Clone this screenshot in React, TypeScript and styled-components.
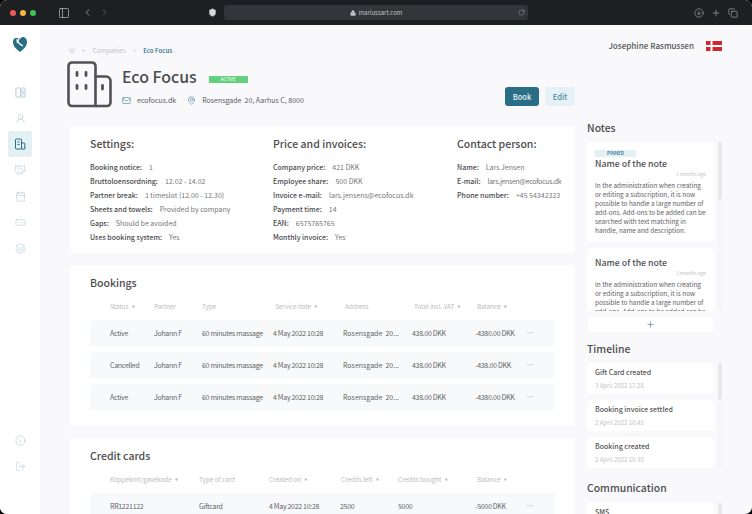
import styled, { createGlobalStyle } from 'styled-components';
import {
	ArrowDownCircle,
	Calendar,
	ChevronLeft,
	ChevronRight,
	Copy,
	Handshake,
	Home,
	Info,
	Layers,
	Lock,
	LogOut,
	Mail,
	MapPin,
	PanelLeft,
	Plus,
	RectangleEllipsis,
	RotateCw,
	Shield,
	UserRound,
} from 'lucide-react';

const FONT = '"Noto Sans CJK JP", "Noto Sans", sans-serif';
const TEAL = '#2a6d87';
const ICON = '#a6c3ce';

const GlobalStyle = createGlobalStyle`
	html, body {
		margin: 0;
		padding: 0;
		background: #000;
		font-family: ${FONT};
		color: #4a4a4c;
	}
`;

const Window = styled.div`
	width: 752px;
	height: 514px;
	border-radius: 7px;
	overflow: hidden;
	display: flex;
	flex-direction: column;
	background: #f9f9fb;
`;

const BrowserBar = styled.div`
	height: 25px;
	flex: none;
	background: #1e1f23;
	display: flex;
	align-items: center;
	padding-left: 10px;
	color: #c9c9cb;
`;

const Light = styled.span<{ $color: string }>`
	width: 6px;
	height: 6px;
	border-radius: 50%;
	background: ${(p) => p.$color};
	margin-right: 4px;
`;

const BarIcons = styled.div<{ $width: number; $start: number }>`
	width: ${(p) => p.$width}px;
	margin-left: ${(p) => p.$start}px;
	display: flex;
	align-items: center;
	justify-content: space-between;
	flex: none;
`;

const BackIcon = styled(ChevronLeft)`
	margin-left: 5px;
`;

const UrlBar = styled.div`
	width: 304px;
	height: 15px;
	flex: none;
	border-radius: 3px;
	background: #34353a;
	display: flex;
	align-items: center;
	justify-content: center;
	gap: 3px;
	font-size: 6px;
	color: #c2c2c4;
	position: relative;
	margin-left: 6px;

	& > .reload {
		position: absolute;
		right: 3px;
		top: 4px;
	}
`;

const Body = styled.div`
	flex: 1;
	display: flex;
	min-height: 0;
`;

const Sidebar = styled.nav`
	width: 40px;
	flex: none;
	background: #fff;
	display: flex;
	flex-direction: column;
	align-items: center;
	padding-top: 12px;
`;

const NavList = styled.div`
	margin-top: 27px;
	display: flex;
	flex-direction: column;
	align-items: center;
`;

const NavItem = styled.div<{ $active?: boolean }>`
	width: 24px;
	height: 26px;
	border-radius: 3px;
	display: flex;
	align-items: center;
	justify-content: center;
	color: ${(p) => (p.$active ? TEAL : ICON)};
	background: ${(p) => (p.$active ? '#e3f0f4' : 'transparent')};
`;

const NavBottom = styled(NavList)`
	margin-top: 166px;
`;

const Content = styled.div`
	flex: 1;
	min-width: 0;
	display: flex;
	flex-direction: column;
	padding: 0 30px;
	overflow: hidden;
`;

const TopBar = styled.div`
	height: 36px;
	flex: none;
	display: flex;
	justify-content: space-between;
`;

const Breadcrumbs = styled.div`
	margin: 20px 0 0 -1px;
	height: 10px;
	display: flex;
	align-items: center;
	font-size: 6.2px;
	color: #cbcbcd;
	gap: 7px;
	font-weight: 500;
`;

const Crumb = styled.span<{ $current?: boolean }>`
	color: ${(p) => (p.$current ? TEAL : '#cbcbcd')};
`;

const UserBox = styled.div`
	margin-top: 15px;
	height: 11px;
	display: flex;
	align-items: center;
	gap: 12px;
	font-size: 8.1px;
	font-weight: 500;
	color: #555;
`;

const Flag = styled.svg`
	display: block;
`;

const PageHeader = styled.div`
	width: 508px;
	height: 59px;
	flex: none;
	margin-left: -3px;
	display: flex;
	align-items: flex-start;
`;

const HeaderInfo = styled.div`
	margin-left: 9px;
	flex: 1;
`;

const TitleRow = styled.div`
	display: flex;
	align-items: center;
	height: 32px;
`;

const Title = styled.h1`
	margin: 0;
	font-size: 15.9px;
	line-height: 22px;
	font-weight: 500;
	color: #4c4c4e;
`;

const Badge = styled.span`
	margin-left: 12px;
	margin-top: 4px;
	width: 39px;
	height: 7px;
	background: #62d07c;
	color: #e7f8eb;
	font-size: 4.5px;
	line-height: 7px;
	text-align: center;
	font-weight: 500;
`;

const MetaRow = styled.div`
	display: flex;
	align-items: center;
	font-size: 7px;
	margin-top: 1px;
	height: 12px;
	color: #5a5a5c;
`;

const MetaIcon = styled.span<{ $gap: number; $start?: number }>`
	display: flex;
	margin-right: ${(p) => p.$gap}px;
	margin-left: ${(p) => p.$start || 0}px;
	color: ${TEAL};
`;

const Actions = styled.div`
	display: flex;
	gap: 6px;
	margin-top: 26px;
`;

const Button = styled.button<{ $primary?: boolean }>`
	height: 19px;
	width: ${(p) => (p.$primary ? 34 : 30)}px;
	border: none;
	padding: 0;
	border-radius: 3px;
	font-family: ${FONT};
	font-size: 7.5px;
	font-weight: 500;
	background: ${(p) => (p.$primary ? TEAL : '#e5f1f5')};
	color: ${(p) => (p.$primary ? '#e8f1f4' : '#4a87a0')};
`;

const Columns = styled.div`
	display: flex;
	gap: 12px;
	align-items: flex-start;
`;

const Main = styled.main`
	width: 505px;
	flex: none;
	margin-top: 6px;
	display: flex;
	flex-direction: column;
	gap: 12px;
`;

const Card = styled.section`
	background: #fff;
	border-radius: 4px;
	padding: 0 20px;
`;

const SettingsCard = styled(Card)`
	height: 127px;
	display: grid;
	grid-template-columns: 183px 184px 1fr;
	padding-top: 9px;
	box-sizing: border-box;
`;

const ColumnTitle = styled.h2`
	margin: 0 0 8px;
	font-size: 10.5px;
	line-height: 17px;
	font-weight: 500;
	color: #4c4c4e;
`;

const InfoRow = styled.div`
	height: 14px;
	line-height: 14px;
	font-size: 7px;
	color: #767678;
	white-space: nowrap;
`;

const InfoLabel = styled.span`
	font-weight: 500;
	color: #4a4a4c;
	margin-right: 7px;
`;

const InfoValue = styled.span<{ $tight?: boolean }>`
	letter-spacing: ${(p) => (p.$tight ? '-0.33px' : '0')};
`;

const TableCard = styled(Card)<{ $height: number }>`
	height: ${(p) => p.$height}px;
	padding-top: 9px;
	box-sizing: border-box;
`;

const TableTitle = styled.h2`
	margin: 0 0 8px;
	font-size: 10.5px;
	line-height: 17px;
	font-weight: 500;
	color: #4c4c4e;
`;

const HeadRow = styled.div<{ $columns: string }>`
	display: grid;
	grid-template-columns: ${(p) => p.$columns};
	padding-left: 20px;
	height: 14px;
	margin-bottom: 7px;
	align-items: center;
	font-size: 6.5px;
	color: #bdbdbf;
	letter-spacing: -0.1px;
	white-space: nowrap;
`;

const SortMark = styled.span`
	font-size: 3.5px;
	margin-left: 3px;
	vertical-align: 1px;
`;

const BodyRow = styled.div<{ $columns: string }>`
	display: grid;
	grid-template-columns: ${(p) => p.$columns};
	padding-left: 20px;
	height: 26px;
	margin-bottom: 6px;
	align-items: center;
	background: #f8f9fb;
	border-radius: 3px;
	font-size: 7px;
	color: #636365;
	letter-spacing: -0.3px;
	white-space: nowrap;
`;

const AddressCell = styled.span`
	letter-spacing: 0;
`;

const Dots = styled.span`
	color: #c6c6c8;
	font-size: 5px;
	letter-spacing: 0.5px;
	line-height: 1;
	margin-top: -3px;
`;

const Aside = styled.aside`
	width: 135px;
	flex: none;
`;

const AsideTitle = styled.h2<{ $top: number; $bottom?: number }>`
	margin: ${(p) => p.$top}px 0 ${(p) => p.$bottom ?? 6}px;
	font-size: 10.4px;
	line-height: 16px;
	font-weight: 500;
	color: #4c4c4e;
`;

const ScrollArea = styled.div<{ $height: number }>`
	display: flex;
	gap: 4px;
	height: ${(p) => p.$height}px;
	overflow: hidden;
`;

const ScrollList = styled.div`
	width: 127px;
	flex: none;
	display: flex;
	flex-direction: column;
	gap: 6px;
`;

const Track = styled.div`
	width: 4px;
	background: #f6f6f8;
`;

const Thumb = styled.div<{ $height: number }>`
	height: ${(p) => p.$height}px;
	background: #e8e8ea;
	border-radius: 2px;
`;

const Note = styled.article`
	background: #fff;
	border-radius: 4px;
	padding: 8px 8px 7px;
	flex: none;
`;

const PinnedTag = styled.div`
	width: 41px;
	height: 7px;
	background: #e3f0f4;
	color: ${TEAL};
	font-size: 4.5px;
	line-height: 7px;
	text-align: center;
	font-weight: 500;
`;

const NoteTitle = styled.h3`
	margin: 0;
	font-size: 8.8px;
	line-height: 13px;
	font-weight: 500;
	color: #505052;
`;

const NoteAge = styled.div`
	text-align: right;
	font-size: 4.8px;
	line-height: 7px;
	color: #c2c2c4;
	margin-bottom: 4px;
`;

const NoteText = styled.p`
	margin: 0;
	font-size: 6.4px;
	line-height: 9px;
	color: #636365;
`;

const AddBar = styled.div`
	width: 125px;
	height: 15px;
	margin: 6px 0 0 1px;
	background: #fff;
	border-radius: 3px;
	display: flex;
	align-items: center;
	justify-content: center;
	color: ${TEAL};
`;

const TimelineItem = styled.div`
	height: 31px;
	flex: none;
	box-sizing: border-box;
	padding: 4px 8px 0;
	background: #fff;
	border-radius: 4px;
`;

const TimelineName = styled.div`
	font-size: 7px;
	line-height: 11px;
	font-weight: 500;
	color: #555;
`;

const TimelineDate = styled.div`
	font-size: 6px;
	line-height: 8px;
	margin-top: 4px;
	color: #c2c2c4;
`;

type InfoItem = { label: string; value: string; tight?: boolean };

const settings: InfoItem[] = [
	{ label: 'Booking notice:', value: '1' },
	{ label: 'Bruttoloensordning:', value: '12.02 - 14.02' },
	{ label: 'Partner break:', value: '1 timeslot (12.00 - 12.30)' },
	{ label: 'Sheets and towels:', value: 'Provided by company' },
	{ label: 'Gaps:', value: 'Should be avoided' },
	{ label: 'Uses booking system:', value: 'Yes' },
];

const prices: InfoItem[] = [
	{ label: 'Company price:', value: '421 DKK' },
	{ label: 'Employee share:', value: '500 DKK' },
	{ label: 'Invoice e-mail:', value: 'lars.jensens@ecofocus.dk' },
	{ label: 'Payment time:', value: '14' },
	{ label: 'EAN:', value: '6575765765' },
	{ label: 'Monthly invoice:', value: 'Yes' },
];

const contact: InfoItem[] = [
	{ label: 'Name:', value: 'Lars Jensen' },
	{ label: 'E-mail:', value: 'lars.jensen@ecofocus.dk', tight: true },
	{ label: 'Phone number:', value: '+45 54342323' },
];

const bookingHeadColumns = '44px 48px 73px 70px 69px 63px 1fr';
const bookingColumns = '44px 48px 71px 70px 69px 63px 52px 1fr';
const cardHeadColumns = '89px 70px 72px 57px 79px 1fr';
const cardColumns = '89px 70px 71px 58px 77px 52px 1fr';

const bookingHead: [string, boolean][] = [
	['Status', true],
	['Partner', false],
	['Type', false],
	['Service date', true],
	['Address', false],
	['Total incl. VAT', true],
	['Balance', true],
];

const cardHead: [string, boolean][] = [
	['Klippekort/gavekode', true],
	['Type of card', false],
	['Created on', true],
	['Credits left', true],
	['Credits bought', true],
	['Balance', true],
];

const bookings = [
	['Active', '-4380.00 DKK'],
	['Cancelled', '-438.00 DKK'],
	['Active', '-4380.00 DKK'],
];

const noteBody =
	'In the administration when creating or editing a subscription, it is now possible to handle a large number of add-ons. Add-ons to be added can be searched with text matching in handle, name and description.';

const InfoColumn = ({ title, rows }: { title: string; rows: InfoItem[] }) => (
	<div>
		<ColumnTitle>{title}</ColumnTitle>
		{rows.map((row) => (
			<InfoRow key={row.label}>
				<InfoLabel>{row.label}</InfoLabel>
				<InfoValue $tight={row.tight}>{row.value}</InfoValue>
			</InfoRow>
		))}
	</div>
);

const TableHead = ({ columns, cells }: { columns: string; cells: [string, boolean][] }) => (
	<HeadRow $columns={columns}>
		{cells.map(([label, sortable]) => (
			<span key={label}>
				{label}
				{sortable && <SortMark>♦</SortMark>}
			</span>
		))}
	</HeadRow>
);

const BuildingIcon = () => (
	<svg width="46" height="47" viewBox="0 0 46 47" fill="none" stroke="#515153" strokeWidth="2.6" strokeLinecap="round">
		<path d="M5 1.500h20a3.500 3.500 0 0 1 3.500 3.500v40H5a3.500 3.500 0 0 1-3.500-3.500V5A3.500 3.500 0 0 1 5 1.500z" />
		<path d="M28.500 15.500H39a4.500 4.500 0 0 1 4.500 4.500v21.500A3.500 3.500 0 0 1 40 45H28.500" />
		<path d="M10 11.500v3M19 11.500v3M10 24.500v3M19 24.500v3M35.500 24.500v3.500" strokeWidth="2.800" />
	</svg>
);

const Logo = () => (
	<svg width="14" height="15" viewBox="0 0 14 15">
		<path d="M3 1C1 1 0 3 0 5c0 4 3 7 7 10 4-3 7-6 7-10 0-2.500-1.500-5-4-5C8.500 0 7.500 1 7 2 6 1 4.500 1 3 1z" fill={TEAL} />
		<path d="M3.500 2.500c1 2 3 5 6.500 6.500M6 1.500 4 6" stroke="#fff" strokeWidth="1.300" fill="none" />
	</svg>
);

const CompanyNavIcon = () => (
	<svg width="12" height="12" viewBox="0 0 12 12" fill="none" stroke="currentColor" strokeWidth="1">
		<rect x="1.500" y="1" width="6" height="10" rx="0.800" />
		<path d="M7.500 5H10a.8.8 0 0 1 .8.8V11H7.500M3.500 4h2M3.500 6.500h2" />
	</svg>
);

const PanelsIcon = () => (
	<svg width="11" height="11" viewBox="0 0 12 12" fill="none" stroke="currentColor" strokeWidth="0.900">
		<rect x="1" y="1" width="5" height="10" rx="0.800" />
		<rect x="7.500" y="1" width="3.500" height="4.400" rx="1" />
		<rect x="7.500" y="6.600" width="3.500" height="4.400" rx="1" />
	</svg>
);

export default function App() {
	return (
		<Window>
			<GlobalStyle />
			<BrowserBar>
				<Light $color="#ee5a52" />
				<Light $color="#f5b83d" />
				<Light $color="#3fc24d" />
				<BarIcons $width={52} $start={18}>
					<PanelLeft size={12} strokeWidth={1.3} />
					<BackIcon size={11} strokeWidth={1.5} />
					<ChevronRight size={11} strokeWidth={1.5} color="#6c6c70" />
				</BarIcons>
				<BarIcons $width={10} $start={98}>
					<Shield size={9} strokeWidth={1.5} fill="#d8d8da" />
				</BarIcons>
				<UrlBar>
					<Lock size={6} strokeWidth={2} fill="#c2c2c4" />
					mariussart.com
					<RotateCw className="reload" size={7} strokeWidth={1.3} />
				</UrlBar>
				<BarIcons $width={44} $start={166}>
					<ArrowDownCircle size={10} strokeWidth={1.2} />
					<Plus size={10} strokeWidth={1.3} />
					<Copy size={10} strokeWidth={1.3} />
				</BarIcons>
			</BrowserBar>
			<Body>
				<Sidebar>
					<Logo />
					<NavList>
						<NavItem>
							<PanelsIcon />
						</NavItem>
						<NavItem>
							<UserRound size={11} strokeWidth={1.1} />
						</NavItem>
						<NavItem $active>
							<CompanyNavIcon />
						</NavItem>
						<NavItem>
							<Handshake size={12} strokeWidth={1} />
						</NavItem>
						<NavItem>
							<Calendar size={11} strokeWidth={1.1} />
						</NavItem>
						<NavItem>
							<RectangleEllipsis size={11} strokeWidth={1.1} />
						</NavItem>
						<NavItem>
							<Layers size={11} strokeWidth={1.1} />
						</NavItem>
					</NavList>
					<NavBottom>
						<NavItem>
							<Info size={11} strokeWidth={1.1} />
						</NavItem>
						<NavItem>
							<LogOut size={11} strokeWidth={1.1} />
						</NavItem>
					</NavBottom>
				</Sidebar>
				<Content>
					<TopBar>
						<Breadcrumbs>
							<Home size={6} color="#cbcbcd" />
							<span>&gt;</span>
							<Crumb>Companies</Crumb>
							<span>&gt;</span>
							<Crumb $current>Eco Focus</Crumb>
						</Breadcrumbs>
						<UserBox>
							Josephine Rasmussen
							<Flag width="16" height="10" viewBox="0 0 16 10">
								<rect width="16" height="10" fill="#d3272f" />
								<rect x="4.5" width="2" height="10" fill="#fff" />
								<rect y="4" width="16" height="2" fill="#fff" />
							</Flag>
						</UserBox>
					</TopBar>
					<PageHeader>
						<BuildingIcon />
						<HeaderInfo>
							<TitleRow>
								<Title>Eco Focus</Title>
								<Badge>ACTIVE</Badge>
							</TitleRow>
							<MetaRow>
								<MetaIcon $gap={6}>
									<Mail size={9} strokeWidth={1.4} />
								</MetaIcon>
								ecofocus.dk
								<MetaIcon $gap={6} $start={11}>
									<MapPin size={9} strokeWidth={1.4} />
								</MetaIcon>
								Rosensgade&nbsp; 20, Aarhus C, 8000
							</MetaRow>
						</HeaderInfo>
						<Actions>
							<Button $primary>Book</Button>
							<Button>Edit</Button>
						</Actions>
					</PageHeader>
					<Columns>
						<Main>
							<SettingsCard>
								<InfoColumn title="Settings:" rows={settings} />
								<InfoColumn title="Price and invoices:" rows={prices} />
								<InfoColumn title="Contact person:" rows={contact} />
							</SettingsCard>
							<TableCard $height={161}>
								<TableTitle>Bookings</TableTitle>
								<TableHead columns={bookingHeadColumns} cells={bookingHead} />
								{bookings.map(([status, balance], index) => (
									<BodyRow $columns={bookingColumns} key={index}>
										<span>{status}</span>
										<span>Johann F</span>
										<span>60 minutes massage</span>
										<span>4 May 2022 10:28</span>
										<AddressCell>Rosensgade&nbsp; 20...</AddressCell>
										<span>438.00 DKK</span>
										<span>{balance}</span>
										<Dots>•••</Dots>
									</BodyRow>
								))}
							</TableCard>
							<TableCard $height={90}>
								<TableTitle>Credit cards</TableTitle>
								<TableHead columns={cardHeadColumns} cells={cardHead} />
								<BodyRow $columns={cardColumns}>
									<span>RR1221122</span>
									<span>Giftcard</span>
									<span>4 May 2022 10:28</span>
									<span>2500</span>
									<span>5000</span>
									<span>-5000 DKK</span>
									<Dots>•••</Dots>
								</BodyRow>
							</TableCard>
						</Main>
						<Aside>
							<AsideTitle $top={0}>Notes</AsideTitle>
							<ScrollArea $height={169}>
								<ScrollList>
									<Note>
										<PinnedTag>PINNED</PinnedTag>
										<NoteTitle>Name of the note</NoteTitle>
										<NoteAge>3 months ago</NoteAge>
										<NoteText>{noteBody}</NoteText>
									</Note>
									<Note>
										<NoteTitle>Name of the note</NoteTitle>
										<NoteAge>3 months ago</NoteAge>
										<NoteText>{noteBody}</NoteText>
									</Note>
								</ScrollList>
								<Track>
									<Thumb $height={58} />
								</Track>
							</ScrollArea>
							<AddBar>
								<Plus size={9} strokeWidth={1.5} />
							</AddBar>
							<AsideTitle $top={9}>Timeline</AsideTitle>
							<ScrollArea $height={107}>
								<ScrollList>
									<TimelineItem>
										<TimelineName>Gift Card created</TimelineName>
										<TimelineDate>3 April 2022 17:28</TimelineDate>
									</TimelineItem>
									<TimelineItem>
										<TimelineName>Booking invoice settled</TimelineName>
										<TimelineDate>2 April 2022 10:45</TimelineDate>
									</TimelineItem>
									<TimelineItem>
										<TimelineName>Booking created</TimelineName>
										<TimelineDate>2 April 2022 10:30</TimelineDate>
									</TimelineItem>
								</ScrollList>
								<Track>
									<Thumb $height={37} />
								</Track>
							</ScrollArea>
							<AsideTitle $top={10} $bottom={7}>Communication</AsideTitle>
							<ScrollArea $height={20}>
								<ScrollList>
									<TimelineItem>
										<TimelineName>SMS</TimelineName>
									</TimelineItem>
								</ScrollList>
								<Track>
									<Thumb $height={20} />
								</Track>
							</ScrollArea>
						</Aside>
					</Columns>
				</Content>
			</Body>
		</Window>
	);
}
